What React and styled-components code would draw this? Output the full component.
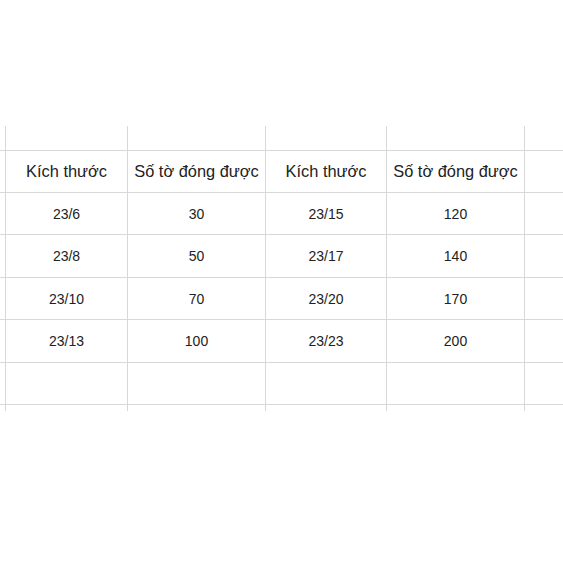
import styled, { createGlobalStyle } from "styled-components";

const GlobalStyle = createGlobalStyle`
	html, body {
		margin: 0;
		padding: 0;
		background: #ffffff;
	}
	body {
		font-family: "Liberation Sans", Arial, sans-serif;
		color: #222222;
	}
`;

const Page = styled.div`
	width: 563px;
	height: 563px;
	padding-top: 126px;
	box-sizing: border-box;
	overflow: hidden;
`;

const Sheet = styled.div`
	display: grid;
	grid-template-columns: 5px 122px 138px 121px 138px 1fr;
	grid-template-rows: 24px 42px 42px 43px 42px 43px 42px 7px;
`;

const Cell = styled.div`
	box-sizing: border-box;
	display: flex;
	align-items: center;
	justify-content: center;
	border-top: ${(p) => (p.$top ? "1px solid #d8d8d8" : "none")};
	border-left: ${(p) => (p.$left ? "1px solid #d8d8d8" : "none")};
	font-size: ${(p) => (p.$head ? "16.4px" : "14px")};
	white-space: nowrap;
`;

const header = ["Kích thước", "Số tờ đóng được", "Kích thước", "Số tờ đóng được"];

const data = [
	["23/6", "30", "23/15", "120"],
	["23/8", "50", "23/17", "140"],
	["23/10", "70", "23/20", "170"],
	["23/13", "100", "23/23", "200"],
];

const rows = [
	{ cells: ["", "", "", ""], top: false },
	{ cells: header, top: true, head: true },
	...data.map((cells) => ({ cells, top: true })),
	{ cells: ["", "", "", ""], top: true },
	{ cells: ["", "", "", ""], top: true },
];

const App = () => {
	return (
		<>
			<GlobalStyle />
			<Page>
				<Sheet>
					{rows.map((row, r) => [
						<Cell key={`${r}-a`} $top={row.top} />,
						...row.cells.map((text, c) => (
							<Cell key={`${r}-${c}`} $top={row.top} $left $head={row.head}>
								{text}
							</Cell>
						)),
						<Cell key={`${r}-z`} $top={row.top} $left />,
					])}
				</Sheet>
			</Page>
		</>
	);
};

export default App;
